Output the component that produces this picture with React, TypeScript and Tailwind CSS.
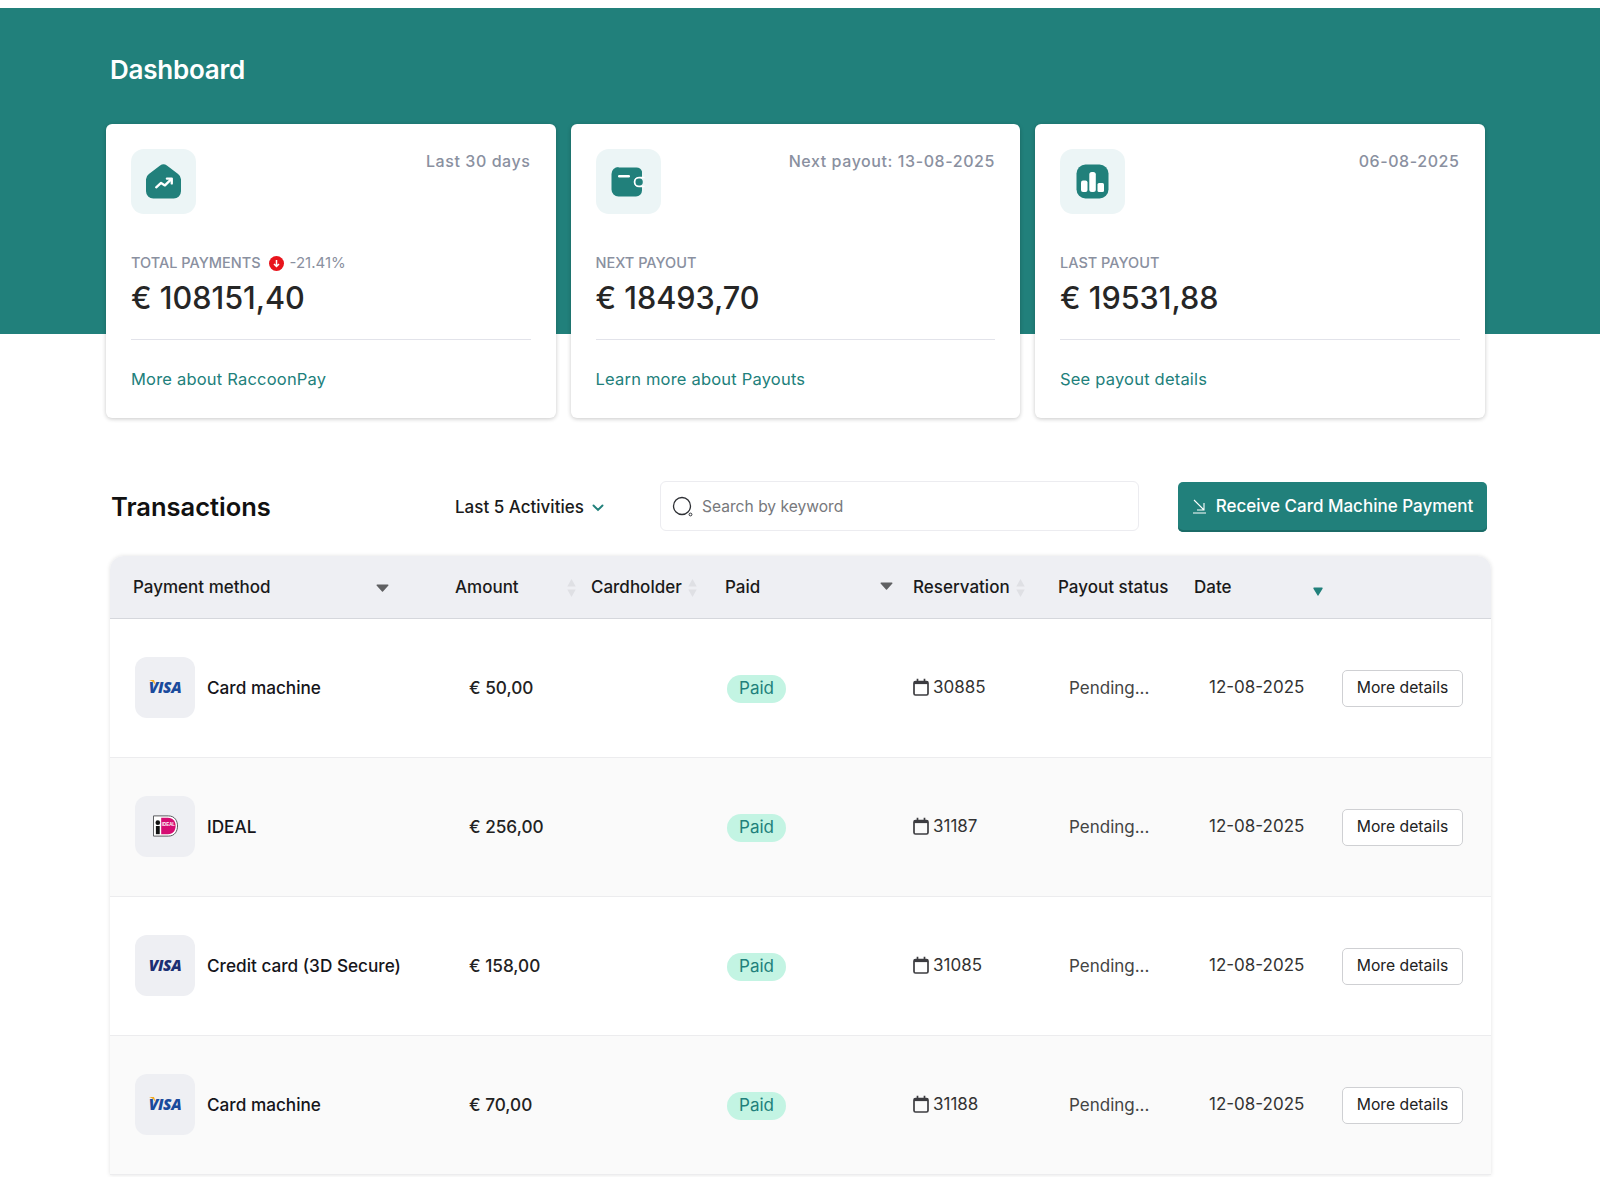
import React from "react";

function HomeIcon() {
  return (
    <svg width="35" height="35" viewBox="0 0 36 36">
      <path d="M14.5 1.6 a5.5 5.5 0 0 1 7 0 l11.5 8.6 a7 7 0 0 1 3 5.6 v12.2 a7.5 7.5 0 0 1 -7.5 7.5 h-21 a7.5 7.5 0 0 1 -7.5 -7.5 v-12.2 a7 7 0 0 1 3 -5.6z" fill="#21807b" />
      <path d="M10.5 24 l5 -4.5 l4 2.5 l6 -6" stroke="#fff" strokeWidth="2.4" fill="none" strokeLinecap="round" strokeLinejoin="round" />
      <path d="M21.5 15 h5 v5" stroke="#fff" strokeWidth="2.4" fill="none" strokeLinecap="round" strokeLinejoin="round" />
    </svg>
  );
}

function WalletIcon() {
  return (
    <svg width="34" height="30" viewBox="0 0 33 30">
      <path d="M7 0.5 h18 a6 6 0 0 1 5.5 4 v5.5 h-3 a5 5 0 0 0 0 10 h3 v3.5 a6 6 0 0 1 -6 6 h-17.5 a7 7 0 0 1 -7 -7 v-15.5 a7 7 0 0 1 7 -7z" fill="#21807b" />
      <rect x="6.5" y="8" width="12" height="2.4" rx="1.2" fill="#fff" />
      <circle cx="27.5" cy="15" r="3.8" fill="#21807b" />
      <path d="M33 10.5 h-5.5 a4.5 4.5 0 0 0 0 9 h5.5" stroke="#fff" strokeWidth="1.6" fill="none" />
    </svg>
  );
}

function BarsIcon() {
  return (
    <svg width="33" height="35" viewBox="0 0 33 35">
      <rect x="0.5" y="0.5" width="32" height="34" rx="9" fill="#21807b" />
      <rect x="5" y="16.5" width="6.5" height="11.5" rx="2" fill="#fff" />
      <rect x="13.3" y="8" width="6.5" height="20" rx="2.5" fill="#fff" />
      <rect x="21.5" y="19" width="6.5" height="9" rx="1.5" fill="#fff" />
    </svg>
  );
}

function StatCard({
  icon,
  side,
  label,
  change,
  amount,
  link,
}: {
  icon: React.ReactNode;
  side: string;
  label: string;
  change?: string;
  amount: string;
  link: string;
}) {
  return (
    <div className="w-[449.5px] h-[294px] rounded-[6px] bg-white px-[25px] pt-[25px] shadow-[0_1px_4px_rgba(0,0,0,0.22)]">
      <div className="flex items-start justify-between">
        <div className="flex h-[65px] w-[65px] items-center justify-center rounded-[13px] bg-[#ecf5f6]">{icon}</div>
        <div className="text-[16px] leading-[24px] tracking-[0.58px] font-medium text-[#8a90a0]">{side}</div>
      </div>
      <div className="mt-[39px] flex h-[20px] items-center text-[14.5px] font-medium text-[#8a90a0]">
        <span>{label}</span>
        <span className={change ? "contents" : "hidden"}>
          <span className="ml-[8px] mr-[6px] flex h-[15px] w-[15px] items-center justify-center rounded-full bg-[#e8141c]">
            <svg width="9" height="9" viewBox="0 0 9 9">
              <path d="M4.5 1 v6 M2 5 l2.5 2.5 L7 5" stroke="#fff" strokeWidth="1.5" fill="none" />
            </svg>
          </span>
          <span className="text-[15px] font-normal">{change}</span>
        </span>
      </div>
      <div className="mt-[4px] text-[30.6px] leading-[42px] font-medium text-[#262626]">{amount}</div>
      <div className="mt-[20px] border-t border-[#e2e3ea] pt-[27px] text-[16.5px] leading-[24px] tracking-[0.2px] text-[#21807b]">{link}</div>
    </div>
  );
}

function SortIdle() {
  return (
    <svg width="11" height="20" viewBox="0 0 10 19" className="shrink-0">
      <path d="M5 1 L9 8 H1z" fill="#dfe0e4" />
      <path d="M5 18 L1 11 H9z" fill="#dfe0e4" />
    </svg>
  );
}

function SortDown({ color = "#5f6062", w = 13, h = 8 }: { color?: string; w?: number; h?: number }) {
  return (
    <svg width={w} height={h} viewBox="0 0 13 8" preserveAspectRatio="none" className="shrink-0">
      <path d="M1 0.5 H12 a0.6 0.6 0 0 1 .4 1 L7 7.5 a0.7 0.7 0 0 1 -1 0 L.6 1.5 a.6 .6 0 0 1 .4 -1z" fill={color} />
    </svg>
  );
}

function Visa({ variant }: { variant: "gold" | "dark" }) {
  const color = variant === "gold" ? "#1a4a9c" : "#1c2f73";
  return (
    <div className="relative flex w-[32px] justify-center">
      <span className={variant === "gold" ? "absolute left-[0px] top-[2px] block" : "hidden"}>
        <svg width="7" height="6" viewBox="0 0 7 6" className="block">
          <path d="M0 0 H5 L7 6 Q5 1.5 0 0z" fill="#f2a922" />
        </svg>
      </span>
      <span className="text-[15.5px] leading-[18px] font-['Open_Sans',sans-serif] font-extrabold italic tracking-[-0.4px] text-center" style={{ color }}>
        VISA
      </span>
    </div>
  );
}

function Ideal() {
  return (
    <svg width="25" height="22" viewBox="0 0 26 22">
      <path d="M.5 .5 H16 C23 .5 25.5 6 25.5 11 C25.5 16 23 21.5 16 21.5 H.5z" fill="#fff" stroke="#55565a" strokeWidth="1" />
      <path d="M8.5 2.5 H15.5 C21 2.5 23.5 6.5 23.5 11 C23.5 15.5 21 19.5 15.5 19.5 H8.5z" fill="#d50c72" />
      <circle cx="5" cy="7.5" r="2.4" fill="#111" />
      <rect x="3" y="11" width="4" height="8.5" fill="#111" />
      <text x="9.2" y="11" fontSize="4.6" fontWeight="800" fill="#fff" fontFamily="'Liberation Sans', sans-serif">IDEAL</text>
    </svg>
  );
}

function CalendarIcon() {
  return (
    <svg width="16" height="18" viewBox="0 0 16 18" className="mt-[-3px] shrink-0">
      <rect x="1" y="3.5" width="14" height="13.5" rx="1.5" fill="none" stroke="#3c3c40" strokeWidth="1.7" />
      <rect x="1" y="3.5" width="14" height="2.6" fill="#3c3c40" />
      <path d="M4.5 .8 v3 M11.5 .8 v3" stroke="#3c3c40" strokeWidth="1.7" />
    </svg>
  );
}

const cols = "grid grid-cols-[331px_136px_134px_188px_145px_137px_147px_163px]";

const rows = [
  { logo: <Visa variant="gold" />, method: "Card machine", amount: "€ 50,00", res: "30885", bg: "bg-white" },
  { logo: <Ideal />, method: "IDEAL", amount: "€ 256,00", res: "31187", bg: "bg-[#fafafa]" },
  { logo: <Visa variant="dark" />, method: "Credit card (3D Secure)", amount: "€ 158,00", res: "31085", bg: "bg-white" },
  { logo: <Visa variant="gold" />, method: "Card machine", amount: "€ 70,00", res: "31188", bg: "bg-[#fafafa]" },
];

export default function App() {
  return (
    <div className="h-[1177px] overflow-hidden bg-white font-['Inter',sans-serif]">
      <div className="pt-[8px]">
        <div className="h-[326px] bg-[#21807b] pl-[110px] pt-[44px]">
          <h1 className="text-[26px] leading-[36px] font-semibold tracking-[-0.25px] text-white">Dashboard</h1>
        </div>
        <div className="mt-[-210px] flex gap-[15px] pl-[106px]">
          <StatCard icon={<HomeIcon />} side="Last 30 days" label="TOTAL PAYMENTS" change="-21.41%" amount="€ 108151,40" link="More about RaccoonPay" />
          <StatCard icon={<WalletIcon />} side="Next payout: 13-08-2025" label="NEXT PAYOUT" amount="€ 18493,70" link="Learn more about Payouts" />
          <StatCard icon={<BarsIcon />} side="06-08-2025" label="LAST PAYOUT" amount="€ 19531,88" link="See payout details" />
        </div>
      </div>

      <div className="mt-[63px] flex h-[50px] items-center pl-[111px]">
        <h2 className="w-[344px] pt-[3px] text-[25.5px] font-semibold text-[#111]">Transactions</h2>
        <div className="flex w-[205px] items-center gap-[8px] pt-[3px] text-[17px] font-medium text-[#1a1a1a]">
          Last 5 Activities
          <svg width="12" height="8" viewBox="0 0 12 8">
            <path d="M1.5 1.5 L6 6 L10.5 1.5" stroke="#21807b" strokeWidth="1.9" fill="none" strokeLinecap="round" />
          </svg>
        </div>
        <div className="flex h-[50px] w-[479px] items-center gap-[9px] rounded-[6px] border border-[#ececf0] pl-[11px] text-[15.6px] text-[#77787c]">
          <svg width="21" height="21" viewBox="0 0 21 21">
            <circle cx="10" cy="10" r="8.5" fill="none" stroke="#2e3035" strokeWidth="1.3" />
            <circle cx="18.5" cy="18.5" r="1.4" fill="none" stroke="#2e3035" strokeWidth="1" />
          </svg>
          <span className="pt-[1px]">Search by keyword</span>
        </div>
        <button className="ml-[39px] mt-[1px] flex h-[50px] w-[309px] items-center justify-center gap-[9px] rounded-[5px] bg-[#21807b] text-[17px] font-medium text-white shadow-[inset_0_-2px_0_#1b6b67]">
          <svg width="15" height="15" viewBox="0 0 15 15">
            <path d="M2 1 L12 11 M12 4 v7 h-7 M1 14 h13" stroke="#fff" strokeWidth="1.1" fill="none" />
          </svg>
          Receive Card Machine Payment
        </button>
      </div>

      <div className="mt-[25px] ml-[110px] w-[1381px] rounded-t-[14px] shadow-[0_0_4px_rgba(0,0,0,0.12)]">
        <div className={`${cols} h-[63px] items-center rounded-t-[14px] border-b border-[#d5d7dc] bg-[#eeeff3] pt-[2px] text-[17px] font-medium text-[#1a1a1a]`}>
          <div className="flex items-center pl-[23px]">
            <span className="w-[243px]">Payment method</span>
            <SortDown />
          </div>
          <div className="flex items-center pl-[14px]">
            <span className="w-[111px]">Amount</span>
            <SortIdle />
          </div>
          <div className="flex items-center gap-[5px] pl-[14px]">
            <span>Cardholder</span>
            <SortIdle />
          </div>
          <div className="flex items-center pl-[14px]">
            <span className="w-[155px]">Paid</span>
            <span className="mt-[-5px]">
              <SortDown />
            </span>
          </div>
          <div className="flex items-center gap-[5px] pl-[14px]">
            <span>Reservation</span>
            <SortIdle />
          </div>
          <div className="pl-[14px]">Payout status</div>
          <div className="flex items-center pl-[13px]">
            <span className="w-[119px]">Date</span>
            <span className="mt-[6px]">
              <SortDown color="#21807b" w={10} h={9} />
            </span>
          </div>
          <div />
        </div>
        {rows.map((r, i) => (
          <div key={i} className={`${cols} h-[139px] items-center border-b border-[#ececee] text-[17px] ${r.bg}`}>
            <div className="flex items-center pl-[25px]">
              <div className="mt-[-2px] flex h-[61px] w-[60px] items-center justify-center rounded-[12px] bg-[#eeeff3]">{r.logo}</div>
              <span className="ml-[12px] text-[17.2px] font-medium text-[#15151a]">{r.method}</span>
            </div>
            <div className="pl-[28px] text-[17.2px] font-medium text-[#222]">{r.amount}</div>
            <div />
            <div className="pl-[16px] pt-[2px]">
              <span className="inline-flex h-[28px] w-[59px] items-center justify-center rounded-full bg-[#c3f4e3] text-[#21807b]">Paid</span>
            </div>
            <div className="flex items-center gap-[4px] pl-[14px] text-[#333]">
              <CalendarIcon />
              {r.res}
            </div>
            <div className="pl-[25px] pt-[2px] text-[#444]">Pending...</div>
            <div className="pl-[28px] text-[#333]">12-08-2025</div>
            <div className="pl-[14px]">
              <button className="h-[37px] w-[121px] rounded-[5px] border border-[#cfd0d3] bg-white text-[15.7px] text-[#222]">More details</button>
            </div>
          </div>
        ))}
      </div>
    </div>
  );
}
